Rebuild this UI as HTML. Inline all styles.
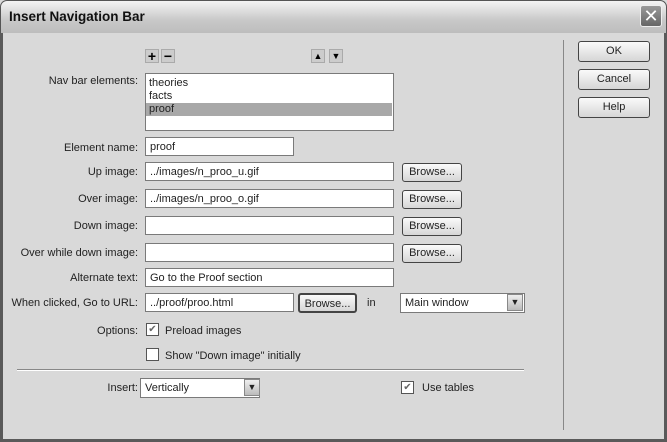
<!DOCTYPE html>
<html><head><style>
*{box-sizing:border-box;margin:0;padding:0}
body{width:667px;height:442px;overflow:hidden;background:#d9d9d9;font-family:"Liberation Sans",sans-serif;font-size:11px;color:#222;position:relative}
.a{position:absolute}
.title{left:0;top:0;width:667px;height:33px;background:linear-gradient(#f4f4f4,#c8c8c8 60%,#bdbdbd);border:1px solid #555;border-bottom:none;border-radius:7px 7px 0 0}
.title span{position:absolute;left:8px;top:8px;font-weight:bold;font-size:13.5px;color:#111}
.close{left:640px;top:5px;width:22px;height:22px;background:linear-gradient(#999,#666);border:1px solid #eee;border-radius:3px;color:#fff;font-size:18px;text-align:center;line-height:20px}
.frame{left:0;top:33px;width:667px;height:409px;border:3px solid #5a5a5a;border-top:none;background:#d9d9d9}
.lbl{text-align:right;width:138px;left:0}
.inp{background:#fff;border:1px solid #7a7a7a;height:19px;padding:3px 4px 0;line-height:13px}
.btn{background:linear-gradient(#fafafa,#d6d6d6);border:1px solid #444;border-radius:3px;text-align:center;line-height:19px}
.sb{width:14px;height:14px;background:#ccc;border:1px solid #aaa;font-size:14px;line-height:12px;text-align:center;font-weight:bold;color:#000}
.cb{width:13px;height:13px;background:#fff;border:1px solid #555;font-size:10px;line-height:11px;text-align:center;color:#666}
.dd{width:16px;height:17px;background:linear-gradient(#eee,#bbb);border:1px solid #888;font-size:9px;text-align:center;line-height:15px}
</style></head><body>
<div class="a title"><span>Insert Navigation Bar</span></div>
<div class="a close">✕</div>
<div class="a frame"></div>
<div class="a" style="left:563px;top:40px;width:1px;height:390px;background:#888"></div>
<div class="a btn" style="left:578px;top:41px;width:72px;height:21px">OK</div>
<div class="a btn" style="left:578px;top:69px;width:72px;height:21px">Cancel</div>
<div class="a btn" style="left:578px;top:97px;width:72px;height:21px">Help</div>

<div class="a sb" style="left:145px;top:49px">+</div>
<div class="a sb" style="left:161px;top:49px">−</div>
<div class="a sb" style="left:311px;top:49px;font-size:9px">▲</div>
<div class="a sb" style="left:329px;top:49px;font-size:9px">▼</div>

<div class="a lbl" style="top:75px">Nav bar elements:</div>
<div class="a" style="left:145px;top:73px;width:249px;height:58px;background:#fff;border:1px solid #7a7a7a;padding-top:3px;line-height:13px">
<div style="padding-left:3px">theories</div><div style="padding-left:3px">facts</div><div style="padding-left:3px;background:#a8a8a8;margin-right:1px">proof</div></div>

<div class="a lbl" style="top:142px">Element name:</div>
<div class="a inp" style="left:145px;top:137px;width:149px">proof</div>

<div class="a lbl" style="top:166px">Up image:</div>
<div class="a inp" style="left:145px;top:162px;width:249px">../images/n_proo_u.gif</div>
<div class="a btn" style="left:402px;top:163px;width:60px;height:19px;line-height:17px">Browse...</div>

<div class="a lbl" style="top:193px">Over image:</div>
<div class="a inp" style="left:145px;top:189px;width:249px">../images/n_proo_o.gif</div>
<div class="a btn" style="left:402px;top:190px;width:60px;height:19px;line-height:17px">Browse...</div>

<div class="a lbl" style="top:220px">Down image:</div>
<div class="a inp" style="left:145px;top:216px;width:249px"></div>
<div class="a btn" style="left:402px;top:217px;width:60px;height:19px;line-height:17px">Browse...</div>

<div class="a lbl" style="top:247px">Over while down image:</div>
<div class="a inp" style="left:145px;top:243px;width:249px"></div>
<div class="a btn" style="left:402px;top:244px;width:60px;height:19px;line-height:17px">Browse...</div>

<div class="a lbl" style="top:272px">Alternate text:</div>
<div class="a inp" style="left:145px;top:268px;width:249px">Go to the Proof section</div>

<div class="a lbl" style="top:297px">When clicked, Go to URL:</div>
<div class="a inp" style="left:145px;top:293px;width:149px">../proof/proo.html</div>
<div class="a btn" style="left:298px;top:293px;width:59px;height:20px;line-height:18px;border-width:2px">Browse...</div>
<div class="a" style="left:367px;top:297px">in</div>
<div class="a inp" style="left:400px;top:293px;width:125px;height:20px">Main window</div>
<div class="a dd" style="left:507px;top:294px">▼</div>

<div class="a lbl" style="top:325px">Options:</div>
<div class="a cb" style="left:146px;top:323px">✔</div>
<div class="a" style="left:165px;top:325px">Preload images</div>
<div class="a cb" style="left:146px;top:348px"></div>
<div class="a" style="left:165px;top:350px">Show "Down image" initially</div>

<div class="a" style="left:17px;top:369px;width:507px;height:2px;border-top:1px solid #888;border-bottom:1px solid #fff"></div>

<div class="a lbl" style="top:382px">Insert:</div>
<div class="a inp" style="left:140px;top:378px;width:120px;height:20px">Vertically</div>
<div class="a dd" style="left:244px;top:379px">▼</div>
<div class="a cb" style="left:401px;top:381px">✔</div>
<div class="a" style="left:422px;top:382px">Use tables</div>
</body></html>
